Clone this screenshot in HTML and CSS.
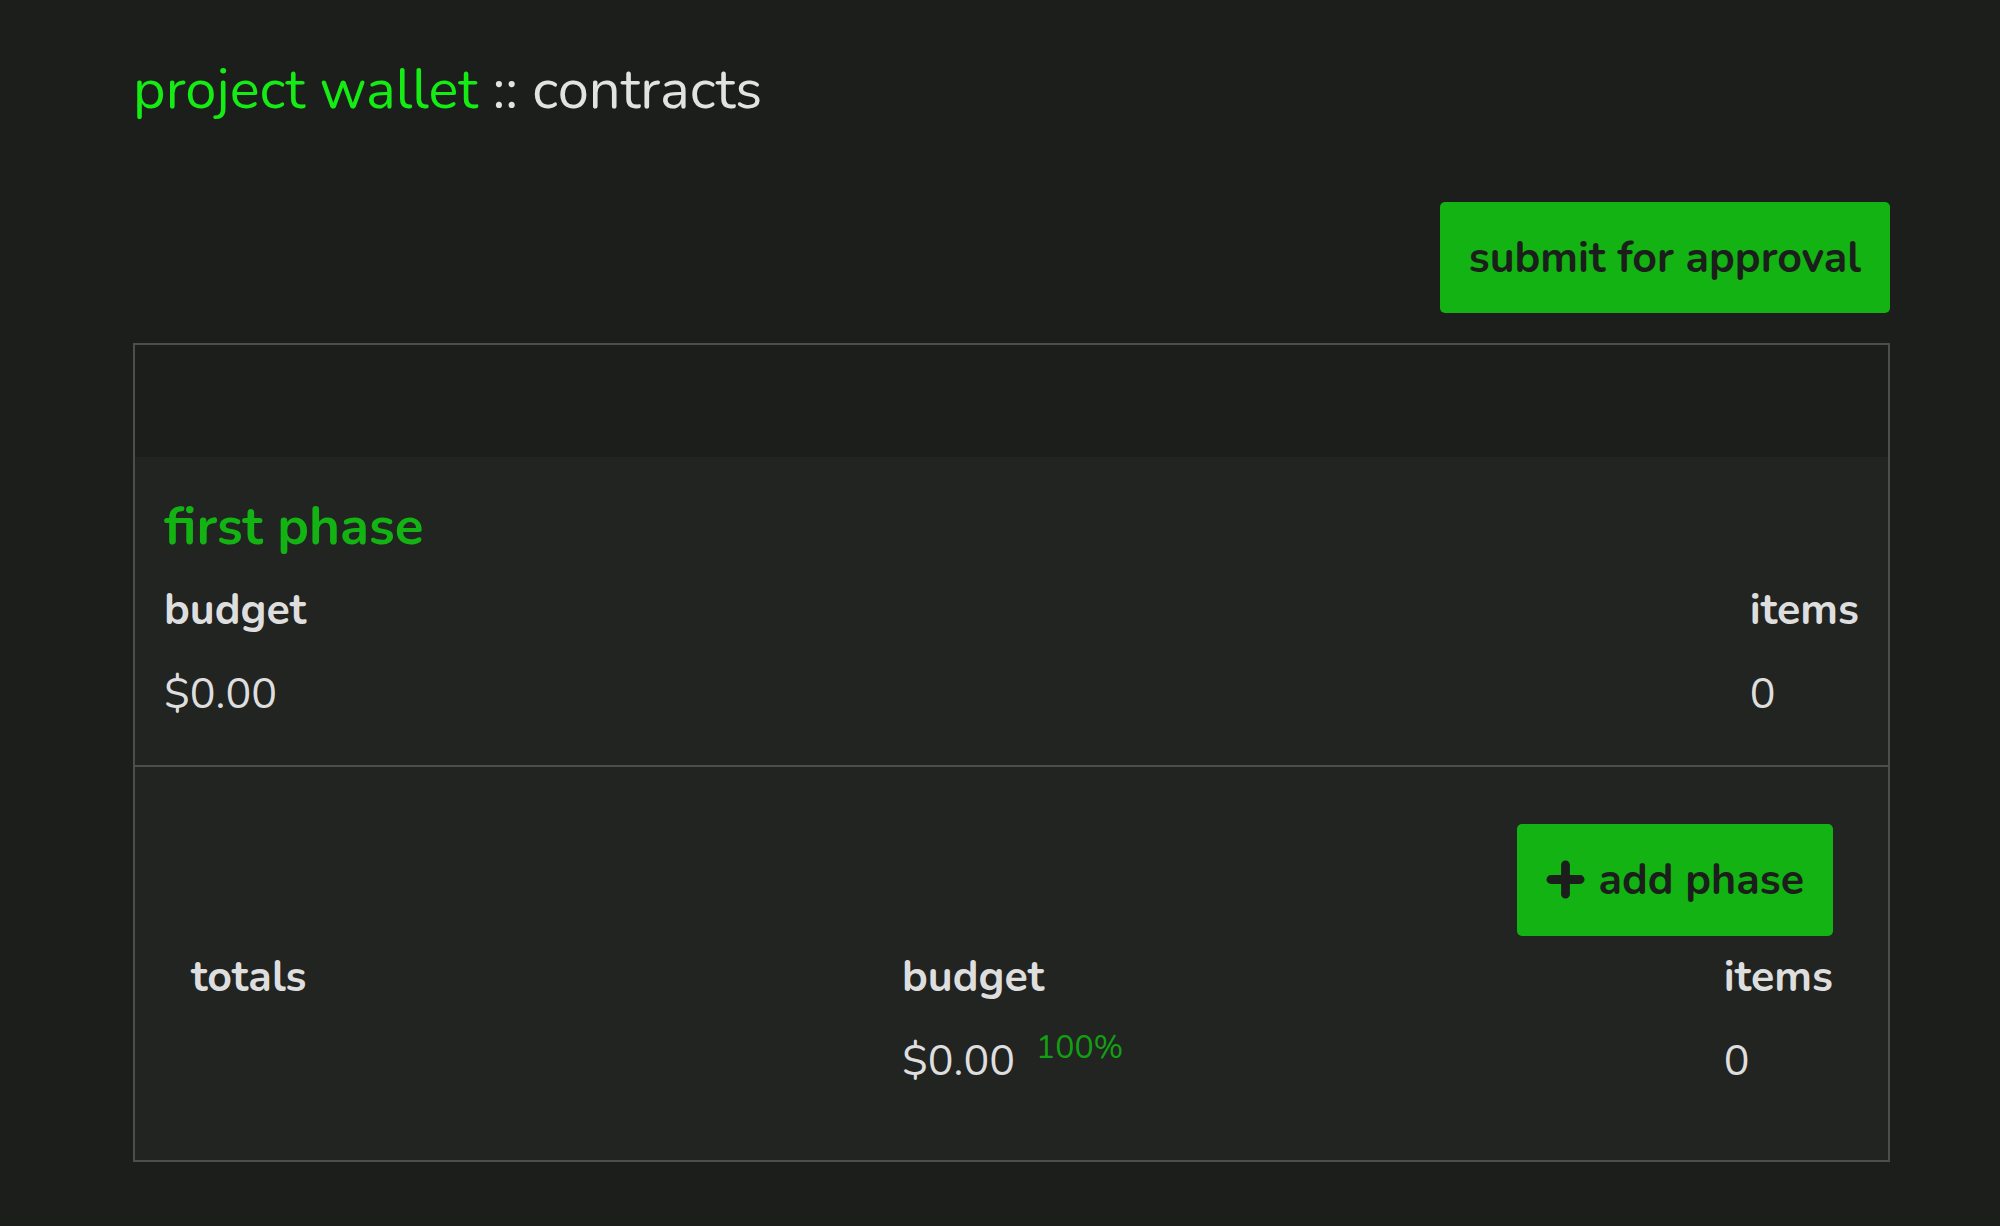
FILE: index.html
```html
<!DOCTYPE html>
<html lang="en">

<head>
    <meta charset="UTF-8">
    <meta name="viewport" content="width=device-width, initial-scale=1.0">
    <title>project wallet :: contracts</title>
    <link rel="stylesheet" href="styles.css">
</head>

<body>
    <div class="page">
        <h1 class="page-title"><span class="brand">project wallet</span> :: contracts</h1>

        <div class="toolbar">
            <button class="btn">submit for approval</button>
        </div>

        <div class="contract">
            <div class="contract-head"></div>

            <section class="phase">
                <h2 class="phase-name">first phase</h2>
                <div class="phase-stats">
                    <div class="stat">
                        <div class="stat-label">budget</div>
                        <div class="stat-value">$0.00</div>
                    </div>
                    <div class="stat">
                        <div class="stat-label">items</div>
                        <div class="stat-value">0</div>
                    </div>
                </div>
            </section>

            <section class="totals">
                <div class="totals-actions">
                    <button class="btn btn-add">
                        <svg class="icon-plus" viewBox="0 0 40 40" aria-hidden="true">
                            <path d="M20 5v30M5 20h30" />
                        </svg>
                        add phase
                    </button>
                </div>
                <div class="stat-label">totals</div>
                <div class="stat-label">budget</div>
                <div class="stat-label">items</div>
                <div class="stat-value"></div>
                <div class="stat-value">$0.00<span class="percent">100%</span></div>
                <div class="stat-value">0</div>
            </section>
        </div>
    </div>
</body>

</html>
```

FILE: styles.css
```css
body {
    margin: 0;
    font-family: 'Nunito', Lato, 'Noto Sans', sans-serif;
    background-color: #1c1e1c;
    color: #dedede;
}

.page {
    padding: 56px 110px 60px 133px;
}

.page-title {
    margin: 0;
    font-size: 56px;
    font-weight: 400;
    line-height: 1.2;
    color: #e2e2e2;
}

.brand {
    color: #14ec14;
}

.toolbar {
    display: flex;
    justify-content: flex-end;
    margin-top: 79px;
}

.btn {
    display: flex;
    align-items: center;
    height: 111px;
    padding: 0 29px;
    border: none;
    border-radius: 5px;
    background-color: #12b312;
    color: #1c1e1c;
    font-family: inherit;
    font-size: 43px;
    font-weight: 700;
    cursor: pointer;
}

.contract {
    margin-top: 30px;
    border: 2px solid #485047;
}

.contract-head {
    height: 112px;
}

.phase {
    padding: 38px 29px 44px;
    background-color: #222422;
}

.phase-name {
    margin: 0;
    font-size: 53px;
    font-weight: 700;
    line-height: 1.2;
    color: #12b312;
}

.phase-stats {
    display: flex;
    justify-content: space-between;
    margin-top: 26px;
}

.stat-label {
    font-size: 43px;
    font-weight: 700;
    line-height: 1.2;
}

.stat-value {
    margin-top: 33px;
    font-size: 43px;
    line-height: 1.2;
}

.totals {
    display: grid;
    grid-template-columns: 711px 1fr auto;
    padding: 57px 55px 73px 56px;
    border-top: 2px solid #485047;
    background-color: #222422;
}

.totals-actions {
    grid-column: 1 / -1;
    display: flex;
    justify-content: flex-end;
    margin-bottom: 16px;
}

.totals .stat-value {
    margin-top: 32px;
}

.btn-add {
    height: 112px;
    gap: 13px;
}

.icon-plus {
    width: 39px;
    height: 39px;
    fill: none;
    stroke: #1c1e1c;
    stroke-width: 9;
    stroke-linecap: round;
}

.percent {
    margin-left: 21px;
    font-size: 32px;
    line-height: 0;
    color: #12a012;
    vertical-align: 17px;
}
```
